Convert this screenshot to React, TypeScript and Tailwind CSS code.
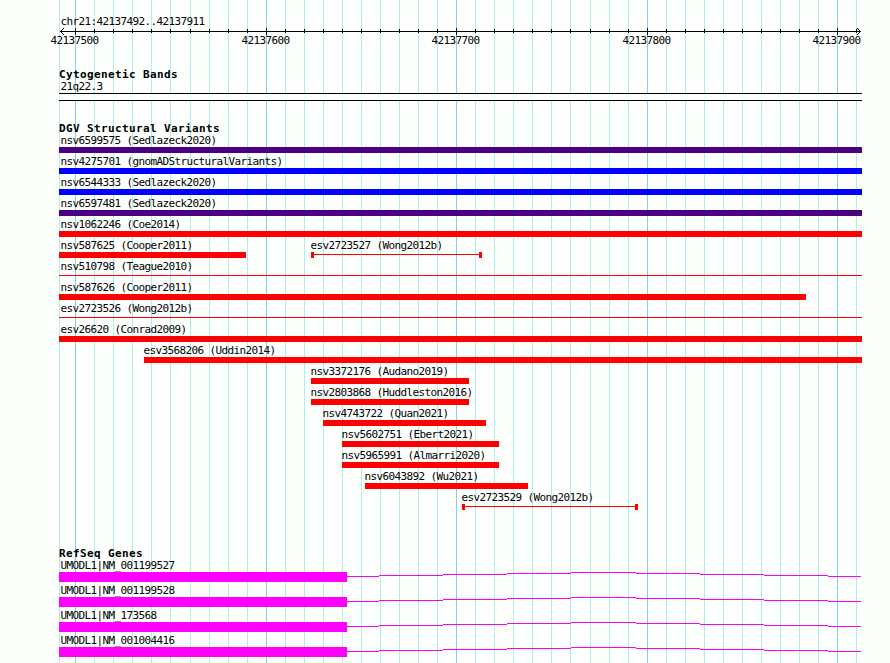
import React from 'react';

type Shape = 'bar' | 'line' | 'capped';

interface Feature {
  name: string;
  start: number;
  end: number;
  color: string;
  shape?: Shape;
}

const LEFT = 59;
const RIGHT = 862;

const RED = 'bg-[#ff0000]';
const BLUE = 'bg-[#0000ff]';
const INDIGO = 'bg-[#4b0082]';

const minorLines = [
  59, 94, 113, 132, 151, 170, 190, 209, 228, 247, 285, 304, 323, 342, 361, 380, 399, 418, 437,
  475, 494, 513, 532, 551, 570, 590, 609, 628, 666, 685, 704, 723, 742, 761, 780, 799, 818, 856,
];

const majorLines = [
  { x: 75, label: '42137500' },
  { x: 266, label: '42137600' },
  { x: 456, label: '42137700' },
  { x: 647, label: '42137800' },
  { x: 837, label: '42137900' },
];

const variantRows: Feature[][] = [
  [{ name: 'nsv6599575 (Sedlazeck2020)', start: LEFT, end: RIGHT, color: INDIGO }],
  [{ name: 'nsv4275701 (gnomADStructuralVariants)', start: LEFT, end: RIGHT, color: BLUE }],
  [{ name: 'nsv6544333 (Sedlazeck2020)', start: LEFT, end: RIGHT, color: BLUE }],
  [{ name: 'nsv6597481 (Sedlazeck2020)', start: LEFT, end: RIGHT, color: INDIGO }],
  [{ name: 'nsv1062246 (Coe2014)', start: LEFT, end: RIGHT, color: RED }],
  [
    { name: 'nsv587625 (Cooper2011)', start: LEFT, end: 246, color: RED },
    { name: 'esv2723527 (Wong2012b)', start: 311, end: 482, color: RED, shape: 'capped' },
  ],
  [{ name: 'nsv510798 (Teague2010)', start: LEFT, end: RIGHT, color: RED, shape: 'line' }],
  [{ name: 'nsv587626 (Cooper2011)', start: LEFT, end: 806, color: RED }],
  [{ name: 'esv2723526 (Wong2012b)', start: LEFT, end: RIGHT, color: RED, shape: 'line' }],
  [{ name: 'esv26620 (Conrad2009)', start: LEFT, end: RIGHT, color: RED }],
  [{ name: 'esv3568206 (Uddin2014)', start: 144, end: RIGHT, color: RED }],
  [{ name: 'nsv3372176 (Audano2019)', start: 311, end: 469, color: RED }],
  [{ name: 'nsv2803868 (Huddleston2016)', start: 311, end: 469, color: RED }],
  [{ name: 'nsv4743722 (Quan2021)', start: 323, end: 486, color: RED }],
  [{ name: 'nsv5602751 (Ebert2021)', start: 342, end: 499, color: RED }],
  [{ name: 'nsv5965991 (Almarri2020)', start: 342, end: 499, color: RED }],
  [{ name: 'nsv6043892 (Wu2021)', start: 365, end: 528, color: RED }],
  [{ name: 'esv2723529 (Wong2012b)', start: 462, end: 638, color: RED, shape: 'capped' }],
];

const genes = [
  'UMODL1|NM_001199527',
  'UMODL1|NM_001199528',
  'UMODL1|NM_173568',
  'UMODL1|NM_001004416',
];

// x, y, width of each step of the intron line, relative to the exon's right edge
const intronSteps = [
  [0, 4, 32],
  [32, 3, 64],
  [96, 2, 64],
  [160, 1, 64],
  [224, 0, 65],
  [289, 1, 64],
  [353, 2, 64],
  [417, 3, 64],
  [481, 4, 33],
];

function Gridlines() {
  return (
    <svg className="absolute inset-0" width="890" height="663" shapeRendering="crispEdges">
      {minorLines.map((x) => (
        <rect key={x} x={x} y="0" width="1" height="663" fill="#afeeee" />
      ))}
      {majorLines.map(({ x }) => (
        <rect key={x} x={x} y="0" width="1" height="663" fill="#87ceeb" />
      ))}
    </svg>
  );
}

function Ruler() {
  return (
    <svg className="block" width="890" height="20" shapeRendering="crispEdges">
      <rect x="60" y="3" width="801" height="1" />
      {minorLines.slice(1).map((x) => (
        <rect key={x} x={x} y="1" width="1" height="4" />
      ))}
      {majorLines.map(({ x, label }) => (
        <g key={x}>
          <rect x={x} y="0" width="1" height="7" />
          <text x={x - 24.5} y="16">{label}</text>
        </g>
      ))}
      {/* arrow heads */}
      {[0, 1, 2, 3].map((d) => (
        <g key={d}>
          <rect x={60 + d} y={3 - d} width="1" height="1" />
          <rect x={60 + d} y={3 + d} width="1" height="1" />
          <rect x={860 - d} y={3 - d} width="1" height="1" />
          <rect x={860 - d} y={3 + d} width="1" height="1" />
        </g>
      ))}
    </svg>
  );
}

function Heading({ children }: { children: React.ReactNode }) {
  return (
    <h2 className="h-[11px] pl-[59px] font-bold leading-[12px] tracking-[0.38px] whitespace-nowrap">
      {children}
    </h2>
  );
}

function Glyph({ color, shape = 'bar' }: { color: string; shape?: Shape }) {
  if (shape === 'line') {
    return <div className={`mt-[2px] h-px ${color}`} />;
  }
  if (shape === 'capped') {
    return (
      <div className="flex h-[6px]">
        <div className={`w-[3px] ${color}`} />
        <div className={`mt-[2px] h-px flex-1 ${color}`} />
        <div className={`w-[3px] ${color}`} />
      </div>
    );
  }
  return <div className={`h-[6px] ${color}`} />;
}

function VariantRow({ features }: { features: Feature[] }) {
  return (
    <div className="flex h-[21px]">
      {features.map((f, i) => {
        const prev = i === 0 ? 0 : features[i - 1].end;
        return (
          <div
            key={f.name}
            className="shrink-0"
            style={{ marginLeft: f.start - prev, width: f.end - f.start }}
          >
            <div
              className={`h-[13px] leading-[13px] whitespace-nowrap ${f.start === LEFT ? 'ml-[1.5px]' : '-ml-[0.5px]'}`}
            >
              {f.name}
            </div>
            <Glyph color={f.color} shape={f.shape} />
          </div>
        );
      })}
    </div>
  );
}

function GeneRow({ name }: { name: string }) {
  return (
    <div className="h-[25px] pl-[59px]">
      <div className="ml-[1.5px] h-[13px] leading-[13px] whitespace-nowrap">{name}</div>
      <div className="flex h-[10px]">
        <div className="w-[288px] bg-[#ff00ff]" />
        <svg width="514" height="10" fill="#ff00ff" shapeRendering="crispEdges">
          {intronSteps.map(([x, y, w]) => (
            <rect key={x} x={x} y={y} width={w} height="1" />
          ))}
        </svg>
      </div>
    </div>
  );
}

export default function App() {
  return (
    <div className="relative h-[663px] w-[890px] overflow-hidden bg-[#fdfffc] font-['DejaVu_Sans_Mono',monospace] text-[11px] tracking-[-0.62px] text-black">
      <Gridlines />
      <div className="relative">
        <header className="pt-[16px]">
          <div className="h-[12px] pl-[60.5px] leading-[12px]">chr21:42137492..42137911</div>
          <Ruler />
        </header>

        <section className="pt-[21px]">
          <Heading>Cytogenetic Bands</Heading>
          <div className="h-[13px] pl-[60.5px] leading-[13px]">21q22.3</div>
          <div className="ml-[59px] h-[8px] w-[803px] border-y border-black bg-[#fdfffc]" />
        </section>

        <section className="pt-[22px]">
          <Heading>DGV Structural Variants</Heading>
          {variantRows.map((row) => (
            <VariantRow key={row[0].name} features={row} />
          ))}
        </section>

        <section className="pt-[36px]">
          <Heading>RefSeq Genes</Heading>
          {genes.map((name) => (
            <GeneRow key={name} name={name} />
          ))}
        </section>
      </div>
    </div>
  );
}
